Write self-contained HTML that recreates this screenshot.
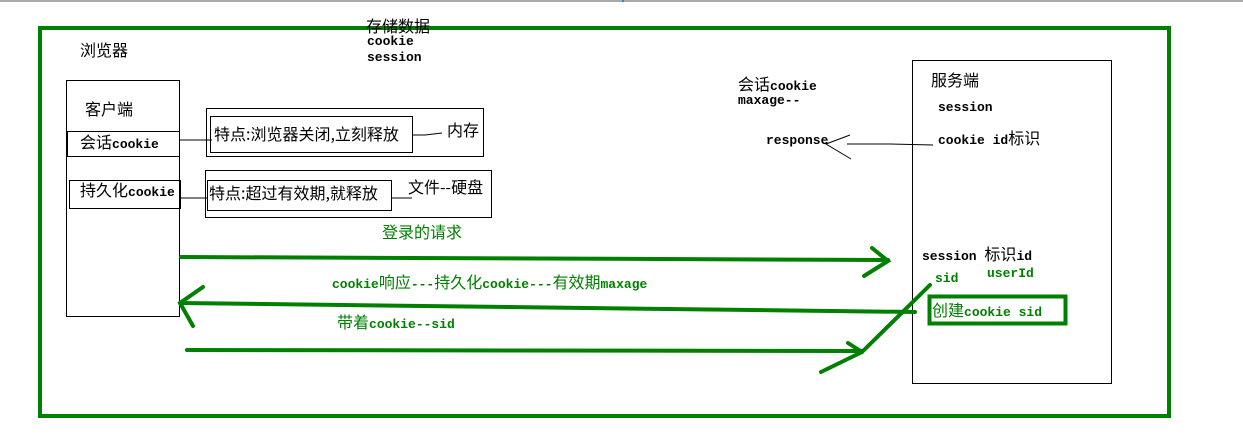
<!DOCTYPE html>
<html><head><meta charset="utf-8"><style>
html,body{margin:0;padding:0;background:#fff;width:1243px;height:437px;overflow:hidden}
svg{display:block}
text{font-family:"WenQuanYi Zen Hei","Noto Sans CJK SC",sans-serif;font-size:16px;fill:#000}
.m{font-family:"Liberation Mono","WenQuanYi Zen Hei",monospace;font-weight:bold;font-size:13px}
.c{font-weight:normal;font-family:"WenQuanYi Zen Hei",sans-serif;font-size:16px}
.g{fill:#008000}
</style></head><body>
<svg width="1243" height="437" xmlns="http://www.w3.org/2000/svg">
<rect x="0" y="0" width="1243" height="2" fill="#aaa"/>
<rect x="622" y="0" width="2" height="2" fill="#1e88e5"/>
<rect x="40" y="28" width="1129" height="388" fill="none" stroke="#008000" stroke-width="4"/>
<g fill="none" stroke="#000" stroke-width="1">
<rect x="66.5" y="80.5" width="113" height="236"/>
<rect x="67.5" y="131.5" width="112" height="25"/>
<rect x="69.5" y="180.5" width="111" height="28"/>
<rect x="206.5" y="108.5" width="277" height="48"/>
<rect x="210.5" y="116.5" width="202" height="36"/>
<rect x="205.5" y="170.5" width="286" height="47"/>
<rect x="207.5" y="180.5" width="184" height="30"/>
<rect x="912.5" y="60.5" width="199" height="323"/>
<polyline points="179,140 212,140"/>
<polyline points="412,135 425,135 442,133"/>
<polyline points="180,198 207,198"/>
<polyline points="391,198 412,198"/>
<polyline points="847,144 890,144 933,145"/>
<polyline points="850,135 826,144 851,159"/>
</g>
<g fill="none" stroke="#008000" stroke-width="4" stroke-linecap="round">
<polyline points="181,257 888,260"/>
<polyline points="872,248 888,261 864,276"/>
<polyline points="180,303 915,312"/>
<polyline points="203,287 180,303 193,326"/>
<polyline points="187,350 862,351"/>
<polyline points="848,343 862,352 930,285"/>
<polyline points="862,352 821,372"/>
</g>
<rect x="929.5" y="296.5" width="136" height="27" fill="none" stroke="#008000" stroke-width="4"/>
<text x="366" y="32">存储数据</text>
<text class="m" x="367" y="45">cookie</text>
<text class="m" x="367" y="61">session</text>
<text x="80" y="56">浏览器</text>
<text x="85" y="115">客户端</text>
<text x="80" y="148">会话<tspan class="m">cookie</tspan></text>
<text x="80" y="196">持久化<tspan class="m">cookie</tspan></text>
<text x="214" y="140">特点:浏览器关闭,立刻释放</text>
<text x="447" y="136">内存</text>
<text x="209" y="199">特点:超过有效期,就释放</text>
<text x="408" y="193">文件--硬盘</text>
<text class="g" x="382" y="238">登录的请求</text>
<text class="m g" x="332" y="288">cookie<tspan class="c">响应</tspan>---<tspan class="c">持久化</tspan>cookie---<tspan class="c">有效期</tspan>maxage</text>
<text class="g" x="337" y="328">带着<tspan class="m g">cookie--sid</tspan></text>
<text x="738" y="90">会话<tspan class="m">cookie</tspan></text>
<text class="m" x="738" y="104">maxage--</text>
<text class="m" x="766" y="144">response</text>
<text x="931" y="86">服务端</text>
<text class="m" x="938" y="111">session</text>
<text class="m" x="938" y="144">cookie id<tspan class="c">标识</tspan></text>
<text class="m" x="922" y="260">session <tspan class="c">标识</tspan>id</text>
<text class="m g" x="935" y="282">sid</text>
<text class="m g" x="987" y="277">userId</text>
<text class="g" x="932" y="316">创建<tspan class="m g">cookie sid</tspan></text>
</svg>
</body></html>
